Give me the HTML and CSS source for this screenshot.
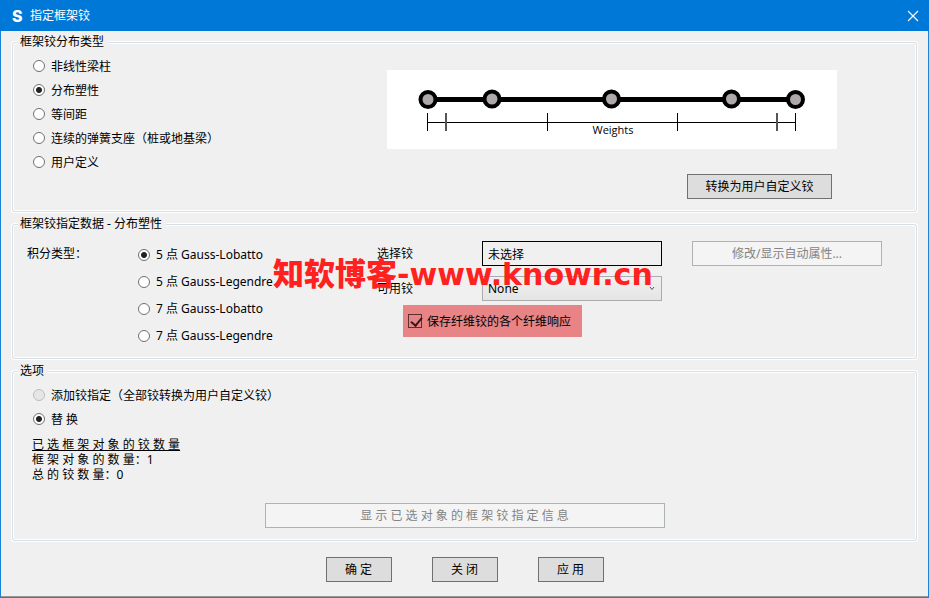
FILE: index.html
```html
<!DOCTYPE html>
<html lang="zh-CN">
<head>
    <meta charset="UTF-8">
    <meta name="viewport" content="width=device-width, initial-scale=1.0">
    <title>指定框架铰</title>
    <link rel="stylesheet" href="styles.css">
</head>
<body>
    <form class="dialog">
        <header class="title-bar">
            <span class="logo">S</span>
            <h1>指定框架铰</h1>
            <button type="button" class="close-button" aria-label="Close">
                <svg width="12" height="12" viewBox="0 0 12 12"><path d="M1 1L11 11M11 1L1 11" stroke="#fff" stroke-width="1.2" fill="none"/></svg>
            </button>
        </header>

        <main class="content">
            <fieldset>
                <legend>框架铰分布类型</legend>
                <div class="type-group">
                    <div class="radio-list">
                        <label><input type="radio" name="dist">非线性梁柱</label>
                        <label><input type="radio" name="dist" checked>分布塑性</label>
                        <label><input type="radio" name="dist">等间距</label>
                        <label><input type="radio" name="dist">连续的弹簧支座（桩或地基梁）</label>
                        <label><input type="radio" name="dist">用户定义</label>
                    </div>
                    <div class="preview">
                        <svg class="diagram" viewBox="0 0 450 79">
                            <path d="M41 29.5H408" stroke="#000" stroke-width="5"/>
                            <g fill="#aea9a9" stroke="#000" stroke-width="4">
                                <circle cx="41" cy="29.5" r="7.5"/>
                                <circle cx="105" cy="29" r="7.5"/>
                                <circle cx="224.5" cy="29" r="7.5"/>
                                <circle cx="344.5" cy="29" r="7.5"/>
                                <circle cx="408.5" cy="29.5" r="7.5"/>
                            </g>
                            <path d="M40.5 52.5H408.5M40.5 43V61M160.5 43V61M290.5 43V61M408.5 43V61" stroke="#000"/>
                            <path d="M59 43V61M390 43V61" stroke="#555" stroke-width="2"/>
                            <text x="226" y="64" text-anchor="middle">Weights</text>
                        </svg>
                        <button type="button" class="convert-button">转换为用户自定义铰</button>
                    </div>
                </div>
            </fieldset>

            <fieldset>
                <legend>框架铰指定数据 - 分布塑性</legend>
                <div class="data-group">
                    <span class="row-label">积分类型：</span>
                    <div class="radio-list">
                        <label><input type="radio" name="integration" checked>5 点 Gauss-Lobatto</label>
                        <label><input type="radio" name="integration">5 点 Gauss-Legendre</label>
                        <label><input type="radio" name="integration">7 点 Gauss-Lobatto</label>
                        <label><input type="radio" name="integration">7 点 Gauss-Legendre</label>
                    </div>
                    <div class="fields">
                        <div class="field">
                            <label for="selectedHinge">选择铰</label>
                            <input type="text" id="selectedHinge" value="未选择" readonly>
                        </div>
                        <div class="field">
                            <label for="availableHinge">可用铰</label>
                            <div class="select-box">
                                <select id="availableHinge">
                                    <option>None</option>
                                </select>
                                <svg class="arrow" width="6" height="5" viewBox="0 0 6 5"><path d="M1 1L3 3.5L5 1" stroke="#555" fill="none"/></svg>
                            </div>
                        </div>
                        <label class="fiber-check"><input type="checkbox" checked>保存纤维铰的各个纤维响应</label>
                        <div class="watermark"><span>知软博客</span>-www.knowr.cn</div>
                    </div>
                    <button type="button" class="modify-button" disabled>修改/显示自动属性...</button>
                </div>
            </fieldset>

            <fieldset>
                <legend>选项</legend>
                <div class="option-group">
                    <div class="radio-list">
                        <label><input type="radio" name="option" disabled>添加铰指定（全部铰转换为用户自定义铰）</label>
                        <label><input type="radio" name="option" checked>替 换</label>
                    </div>
                    <div class="counts">
                        <p><u>已 选 框 架 对 象 的 铰 数 量</u></p>
                        <p>框 架 对 象 的 数 量：1</p>
                        <p>总 的 铰 数 量：0</p>
                    </div>
                    <button type="button" class="info-button" disabled>显 示 已 选 对 象 的 框 架 铰 指 定 信 息</button>
                </div>
            </fieldset>
        </main>

        <footer class="actions">
            <button type="submit">确 定</button>
            <button type="button">关 闭</button>
            <button type="button">应 用</button>
        </footer>
    </form>
</body>
</html>
```

FILE: styles.css
```css
* {
    box-sizing: border-box;
}
body {
    margin: 0;
    font-family: "Noto Sans", "Noto Sans CJK SC", sans-serif;
    font-size: 12px;
    line-height: 15px;
    color: #000;
}
button, input, select {
    font: inherit;
    color: inherit;
    margin: 0;
}
.dialog {
    display: flex;
    flex-direction: column;
    min-height: 100vh;
    background: #f0f0f0;
    border: 1px solid #1883d7;
    border-top-width: 0;
    box-shadow: inset 0 -1px 0 #999;
}

/* title bar */
.title-bar {
    display: flex;
    align-items: center;
    height: 31px;
    margin: 0 -1px;
    padding: 0 10px;
    background: #0078d7;
    color: #fff;
}
.logo {
    width: 20px;
    padding-left: 2px;
    font: 800 16px/20px Inter, sans-serif;
}
.title-bar h1 {
    flex: 1;
    margin: 0;
    font-size: 12px;
    font-weight: normal;
}
.close-button {
    display: flex;
    padding: 0;
    border: none;
    background: none;
}

/* group boxes */
.content {
    display: flex;
    flex-direction: column;
    gap: 3px;
    padding: 2px 11px 0;
}
fieldset {
    min-width: 0;
    margin: 0;
    padding: 0;
    border: 1px solid #d5dfe5;
    border-radius: 3px;
    box-shadow: 0 0 0 1px #fff, inset 0 0 0 1px #fff;
}
legend {
    margin-left: 5px;
    padding: 0 4px 0 2px;
    line-height: 18px;
    background: #f0f0f0;
}
.type-group {
    display: grid;
    grid-template-columns: 374px minmax(0, 450px);
    padding-bottom: 12px;
}
.type-group .radio-list, .option-group .radio-list {
    padding: 3px 0 0 20px;
}
.radio-list label {
    display: flex;
    align-items: center;
    gap: 6px;
    height: 24px;
}
input[type="radio"] {
    appearance: none;
    width: 12px;
    height: 12px;
    border: 1px solid #707070;
    border-radius: 50%;
    background: #fff;
}
input[type="radio"]:checked {
    background: radial-gradient(circle, #222 0 2.5px, #fff 3.5px);
}
input[type="radio"]:disabled {
    border-color: #bcbcbc;
    background: #e6e6e6;
}

/* buttons */
.content button, .actions button {
    height: 25px;
    padding: 0;
    border: 1px solid #707070;
    background: #ddd;
}
.content button:disabled {
    border-color: #adb2b5;
    background: #f4f4f4;
    color: #838383;
}

.preview {
    display: flex;
    flex-direction: column;
    gap: 25px;
    padding-top: 19px;
}
.diagram {
    display: block;
    width: 100%;
    background: #fff;
}
.diagram text {
    font-family: "Open Sans", sans-serif;
    font-size: 11px;
}
.preview .convert-button {
    align-self: flex-end;
    width: 145px;
    margin-right: 5px;
}

/* hinge data */
.data-group {
    display: grid;
    grid-template-columns: 111px 239px 285px 190px;
    align-items: start;
    padding: 8px 0 9px 14px;
}
.data-group .radio-list label {
    height: 27px;
}
.row-label {
    line-height: 25px;
}
.fields {
    position: relative;
    display: flex;
    flex-direction: column;
    gap: 10px;
}
.field {
    display: grid;
    grid-template-columns: 105px 180px;
    align-items: center;
}
.field input {
    width: 100%;
    height: 25px;
    padding: 0 5px;
    border: 1px solid #000;
    border-radius: 0;
    background: #f0f0f0;
}
.select-box {
    position: relative;
}
.select-box select {
    display: block;
    appearance: none;
    width: 100%;
    height: 25px;
    padding: 0 5px;
    border: 1px solid #acacac;
    border-radius: 0;
    background: linear-gradient(#f0f0f0, #e5e5e5);
}
.arrow {
    position: absolute;
    right: 7px;
    top: 10px;
}
.fiber-check {
    display: flex;
    align-items: center;
    align-self: flex-start;
    gap: 5px;
    height: 32px;
    margin: -6px 0 0 26px;
    padding: 0 11px 0 5px;
    background: #e98486;
}
.fiber-check input {
    appearance: none;
    width: 14px;
    height: 14px;
    border: 1px solid #5a3031;
    background: none;
}
.fiber-check input:checked::before {
    content: "";
    display: block;
    width: 5px;
    height: 9px;
    margin: 0 0 0 4px;
    border: solid #331c1d;
    border-width: 0 2px 2px 0;
    transform: rotate(40deg);
}
.watermark {
    position: absolute;
    left: -104px;
    top: 15px;
    font: bold 30px/32px "DejaVu Sans", sans-serif;
    color: #ff2020;
    white-space: nowrap;
    pointer-events: none;
}
.watermark span {
    font-family: "Noto Sans CJK SC", sans-serif;
    font-size: 31px;
    font-weight: 900;
}
.data-group .modify-button {
    margin-left: 30px;
    width: 190px;
}

/* options */
.option-group {
    display: flex;
    flex-direction: column;
    padding-bottom: 12px;
}
.counts {
    margin: 6px 0 21px 19px;
}
.counts p {
    margin: 0;
}
.option-group .info-button {
    align-self: center;
    width: 400px;
}

.actions {
    display: flex;
    justify-content: center;
    gap: 40px;
    padding: 16px 0 14px;
}
.actions button {
    width: 66px;
}
```
